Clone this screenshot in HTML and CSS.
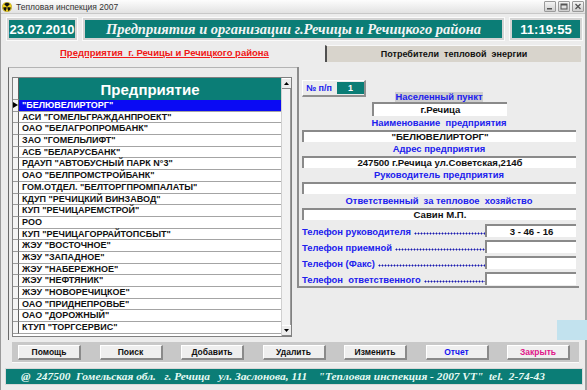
FILE: index.html
```html
<!DOCTYPE html>
<html lang="ru">

<head>
    <meta charset="UTF-8">
    <title>Тепловая инспекция 2007</title>
    <link rel="stylesheet" href="styles.css">
</head>

<body>
    <div class="window">
        <!-- Title bar -->
        <div class="titlebar">
            <svg class="app-icon" width="10" height="10" viewBox="0 0 10 10">
                <circle cx="5" cy="5" r="4.8" fill="#f2d21a" stroke="#8a7a10" stroke-width="0.4" />
                <path d="M5 5 L2.2 2.2 A4 4 0 0 1 7.8 2.2 Z" fill="#111" />
                <path d="M5 5 L8.9 5.6 A4 4 0 0 1 6.2 8.9 Z" fill="#111" />
                <path d="M5 5 L3.8 8.9 A4 4 0 0 1 1.1 5.6 Z" fill="#111" />
                <circle cx="5" cy="5" r="1.1" fill="#f2d21a" />
                <circle cx="5" cy="5" r="0.7" fill="#111" />
            </svg>
            <span class="caption">Тепловая инспекция 2007</span>
            <div class="wnd-btns">
                <span class="wnd-btn"><svg width="8" height="7" viewBox="0 0 8 7"><rect x="1" y="5" width="5" height="1.5" fill="#555" /></svg></span>
                <span class="wnd-btn"><svg width="8" height="7" viewBox="0 0 8 7"><rect x="1" y="1" width="6" height="5" fill="none" stroke="#555" stroke-width="1" /><rect x="1" y="1" width="6" height="1.5" fill="#555" /></svg></span>
                <span class="wnd-btn"><svg width="8" height="7" viewBox="0 0 8 7"><path d="M1.5 1 L6.5 6 M6.5 1 L1.5 6" stroke="#555" stroke-width="1.3" /></svg></span>
            </div>
        </div>

        <!-- Header with date, title and clock -->
        <div class="header">
            <div class="tbox date">23.07.2010</div>
            <div class="tbox title">Предприятия и организации г.Речицы и Речицкого района</div>
            <div class="tbox time">11:19:55</div>
        </div>

        <!-- Tabs -->
        <div class="subrow">
            <a class="link">Предприятия&nbsp; г. Речицы и Речицкого района</a>
            <div class="tab">Потребители&nbsp; тепловой&nbsp; энергии</div>
        </div>

        <div class="main">
            <!-- List of enterprises -->
            <div class="list-frame">
                <div class="list">
                    <div class="grid">
                        <div class="grid-head"><span class="sel"></span><span class="head-cell">Предприятие</span></div>
                        <div class="row current"><span class="sel"><i class="pointer"></i></span><span class="cell">"БЕЛЮВЕЛИРТОРГ"</span></div>
                        <div class="row"><span class="sel"></span><span class="cell">АСИ "ГОМЕЛЬГРАЖДАНПРОЕКТ"</span></div>
                        <div class="row"><span class="sel"></span><span class="cell">ОАО "БЕЛАГРОПРОМБАНК"</span></div>
                        <div class="row"><span class="sel"></span><span class="cell">ЗАО "ГОМЕЛЬЛИФТ"</span></div>
                        <div class="row"><span class="sel"></span><span class="cell">АСБ "БЕЛАРУСБАНК"</span></div>
                        <div class="row"><span class="sel"></span><span class="cell">РДАУП "АВТОБУСНЫЙ ПАРК N°3"</span></div>
                        <div class="row"><span class="sel"></span><span class="cell">ОАО "БЕЛПРОМСТРОЙБАНК"</span></div>
                        <div class="row"><span class="sel"></span><span class="cell">ГОМ.ОТДЕЛ. "БЕЛТОРГПРОМПАЛАТЫ"</span></div>
                        <div class="row"><span class="sel"></span><span class="cell">КДУП "РЕЧИЦКИЙ ВИНЗАВОД"</span></div>
                        <div class="row"><span class="sel"></span><span class="cell">КУП "РЕЧИЦАРЕМСТРОЙ"</span></div>
                        <div class="row"><span class="sel"></span><span class="cell">РОО</span></div>
                        <div class="row"><span class="sel"></span><span class="cell">КУП "РЕЧИЦАГОРРАЙТОПСБЫТ"</span></div>
                        <div class="row"><span class="sel"></span><span class="cell">ЖЭУ "ВОСТОЧНОЕ"</span></div>
                        <div class="row"><span class="sel"></span><span class="cell">ЖЭУ "ЗАПАДНОЕ"</span></div>
                        <div class="row"><span class="sel"></span><span class="cell">ЖЭУ "НАБЕРЕЖНОЕ"</span></div>
                        <div class="row"><span class="sel"></span><span class="cell">ЖЭУ "НЕФТЯНИК"</span></div>
                        <div class="row"><span class="sel"></span><span class="cell">ЖЭУ "НОВОРЕЧИЦКОЕ"</span></div>
                        <div class="row"><span class="sel"></span><span class="cell">ОАО "ПРИДНЕПРОВЬЕ"</span></div>
                        <div class="row"><span class="sel"></span><span class="cell">ОАО "ДОРОЖНЫЙ"</span></div>
                        <div class="row"><span class="sel"></span><span class="cell">КТУП "ТОРГСЕРВИС"</span></div>
                    </div>
                    <div class="vscroll">
                        <span class="arrow"><svg width="5" height="3" viewBox="0 0 5 3"><path d="M0 3 L2.5 0 L5 3 Z" fill="#000" /></svg></span>
                        <span class="track"></span>
                        <span class="arrow"><svg width="5" height="3" viewBox="0 0 5 3"><path d="M0 0 L2.5 3 L5 0 Z" fill="#000" /></svg></span>
                    </div>
                </div>
            </div>

            <!-- Details of the current enterprise -->
            <div class="card">
                <div class="np-row">
                    <div class="np-box"><span class="np-label">№ п/п</span><span class="np-num">1</span></div>
                    <div class="lbl hl">Населенный пункт</div>
                </div>
                <div class="field city">г.Речица</div>
                <div class="lbl">Наименование&nbsp; предприятия</div>
                <div class="field">"БЕЛЮВЕЛИРТОРГ"</div>
                <div class="lbl">Адрес предприятия</div>
                <div class="field">247500 г.Речица ул.Советская,214б</div>
                <div class="lbl">Руководитель предприятия</div>
                <div class="field"></div>
                <div class="lbl">Ответственный&nbsp; за тепловое&nbsp; хозяйство</div>
                <div class="field">Савин М.П.</div>
                <div class="phones">
                    <div class="phone"><span class="phone-lbl">Телефон руководителя</span><span class="dots"></span><span class="field phone-val">3 - 46 - 16</span></div>
                    <div class="phone"><span class="phone-lbl">Телефон приемной</span><span class="dots"></span><span class="field phone-val"></span></div>
                    <div class="phone"><span class="phone-lbl">Телефон (Факс)</span><span class="dots"></span><span class="field phone-val"></span></div>
                    <div class="phone"><span class="phone-lbl">Телефон&nbsp; ответственного</span><span class="dots"></span><span class="field phone-val"></span></div>
                </div>
            </div>
        </div>

        <!-- Command buttons -->
        <div class="buttons">
            <button class="btn">Помощь</button>
            <button class="btn">Поиск</button>
            <button class="btn">Добавить</button>
            <button class="btn">Удалить</button>
            <button class="btn">Изменить</button>
            <button class="btn report">Отчет</button>
            <button class="btn close">Закрыть</button>
        </div>

        <div class="footer">@&nbsp; 247500&nbsp; Гомельская обл.&nbsp;&nbsp; г. Речица&nbsp;&nbsp; ул. Заслонова, 111&nbsp;&nbsp;&nbsp; "Тепловая инспекция - 2007 VT"&nbsp; tel.&nbsp; 2-74-43</div>
    </div>
    <div class="desk-patch"></div>
</body>

</html>
```

FILE: styles.css
```css
/* Page */
body {
    margin: 0;
    background: #dcdcdc;
    font-family: "Liberation Sans", Arial, sans-serif;
}

.window {
    position: relative;
    width: 587px;
    height: 390px;
    box-sizing: border-box;
    background: #ececec;
    border-left: 1px solid #9a9a9a;
    border-right: 2px solid #a0a0a0;
    overflow: hidden;
}

/* Title bar */
.titlebar {
    height: 14px;
    display: flex;
    align-items: center;
    padding-left: 1px;
    background: linear-gradient(#fdfdfd, #e2e2e2);
    border-bottom: 1px solid #c8c8c8;
    box-sizing: border-box;
}

.app-icon {
    margin-right: 4px;
}

.caption {
    font-size: 8.5px;
    color: #333;
}

.wnd-btns {
    margin-left: auto;
    margin-right: 1px;
    display: flex;
    gap: 2px;
}

.wnd-btn {
    width: 10px;
    height: 9px;
    display: flex;
    align-items: center;
    justify-content: center;
    background: linear-gradient(#f4f4f4, #cfcfcf);
    border: 1px solid #9a9a9a;
    border-radius: 1px;
}

/* Header */
.header {
    display: flex;
    gap: 6px;
    padding: 4px 0 0 6px;
}

.tbox {
    height: 22px;
    box-sizing: border-box;
    background: #0b7d76;
    border: 2px solid #d4d4d4;
    box-shadow: 0 0 0 1px #fafafa;
    color: #fff;
    display: flex;
    align-items: center;
    justify-content: center;
}

.date {
    width: 70px;
    font-weight: bold;
    font-size: 13px;
}

.title {
    width: 421px;
    font-family: "Liberation Serif", "Times New Roman", serif;
    font-style: italic;
    font-weight: bold;
    font-size: 14.5px;
    color: #f4f4f4;
}

.time {
    width: 72px;
    font-weight: bold;
    font-size: 13px;
}

/* Tabs */
.subrow {
    display: flex;
    align-items: center;
    height: 27px;
}

.link {
    margin-left: 59px;
    margin-top: -2px;
    font-size: 9.5px;
    font-weight: bold;
    color: #f01818;
    text-decoration: underline;
}

.tab {
    margin-left: auto;
    margin-right: 4px;
    width: 256px;
    height: 17px;
    box-sizing: border-box;
    background: #d8d4cc;
    border-left: 2px solid #505050;
    border-top: 1px solid #f8f8f8;
    font-size: 9px;
    font-weight: bold;
    color: #111;
    display: flex;
    align-items: center;
    justify-content: center;
}

/* Main area */
.main {
    display: flex;
    height: 273px;
}

.list-frame {
    width: 289px;
    margin-left: 7px;
    box-sizing: border-box;
    border-left: 1px solid #6a6a6a;
    border-top: 1px solid #b4b4b4;
    padding: 9px 0 0 3px;
}

.list {
    display: flex;
    width: 280px;
    height: 260px;
    box-sizing: border-box;
    border: 1px solid #808080;
    background: #fff;
}

.grid {
    width: 271px;
}

.grid-head,
.row {
    display: flex;
}

.grid-head {
    height: 22px;
}

.sel {
    width: 6px;
    flex-shrink: 0;
    box-sizing: border-box;
    border-right: 1px solid #606060;
    border-bottom: 1px solid #9a9a9a;
    background: #f4f4f4;
    position: relative;
}

.head-cell {
    flex: 1;
    background: #0b7d76;
    color: #fff;
    font-size: 15px;
    font-weight: bold;
    display: flex;
    align-items: center;
    justify-content: center;
}

.row {
    height: 11.7px;
}

.cell {
    flex: 1;
    box-sizing: border-box;
    border-bottom: 1px solid #a4a4a4;
    padding-left: 3px;
    font-size: 9px;
    font-weight: bold;
    line-height: 11px;
    color: #111;
    white-space: nowrap;
}

.row.current .cell {
    background: #0a0af4;
    color: #fff;
}

.pointer {
    position: absolute;
    left: 0;
    top: 2px;
    border-left: 5px solid #000;
    border-top: 3px solid transparent;
    border-bottom: 3px solid transparent;
}

.vscroll {
    width: 9px;
    display: flex;
    flex-direction: column;
    background: #f2f2f2;
    border-left: 1px solid #d0d0d0;
}

.arrow {
    height: 9px;
    display: flex;
    align-items: center;
    justify-content: center;
    background: #ececec;
    border-top: 1px solid #fff;
    border-bottom: 1px solid #888;
}

.track {
    flex: 1;
    border-right: 1px solid #9a9a9a;
}

/* Details card */
.card {
    width: 282px;
    height: 221px;
    box-sizing: border-box;
    border-left: 2px solid #8c8c8c;
    border-bottom: 2px solid #8c8c8c;
    padding: 13px 3px 0 3px;
}

.np-row {
    display: flex;
    height: 22px;
}

.np-box {
    width: 64px;
    height: 17px;
    box-sizing: border-box;
    border-top: 1px solid #fff;
    border-left: 1px solid #fff;
    border-right: 2px solid #909090;
    border-bottom: 2px solid #909090;
    display: flex;
    align-items: center;
    padding-left: 3px;
    gap: 5px;
}

.np-label {
    font-size: 9px;
    font-weight: bold;
    color: #2020ee;
}

.np-num {
    width: 27px;
    height: 12px;
    background: #0b7d76;
    color: #fff;
    font-size: 9px;
    font-weight: bold;
    text-align: center;
    line-height: 12px;
}

.lbl {
    height: 14px;
    font-size: 9.4px;
    font-weight: bold;
    color: #2020ee;
    text-align: center;
    line-height: 14px;
    white-space: nowrap;
}

.lbl.hl {
    align-self: flex-end;
    margin-left: 29px;
    width: 88px;
    height: 10px;
    line-height: 10px;
    background: #cdcdcd;
}

.field {
    height: 12px;
    box-sizing: border-box;
    background: #fff;
    border-top: 2px solid #8a8a8a;
    border-left: 2px solid #8a8a8a;
    font-size: 9.6px;
    font-weight: bold;
    color: #111;
    text-align: center;
    line-height: 10px;
    white-space: nowrap;
}

.field.city {
    width: 135px;
    height: 14px;
    line-height: 12px;
    margin-left: 70px;
}

.phones {
    margin-top: 4px;
    display: flex;
    flex-direction: column;
    gap: 3px;
}

.phone {
    display: flex;
    align-items: flex-end;
    height: 13px;
}

.phone-lbl {
    font-size: 9.4px;
    font-weight: bold;
    color: #2020ee;
    line-height: 11px;
    white-space: nowrap;
    padding-right: 3px;
}

/* dotted leader between label and value */
.dots {
    flex: 1;
    height: 3px;
    margin-bottom: 2px;
    background-image: radial-gradient(circle, #1a1ab0 0.9px, transparent 1.1px);
    background-size: 3px 3px;
    background-repeat: repeat-x;
}

.phone-val {
    width: 91px;
    flex-shrink: 0;
    height: 13px;
    line-height: 11px;
}

/* Buttons */
.buttons {
    display: flex;
    gap: 18.5px;
    margin: 2px 6px 0 11px;
    height: 21px;
    box-sizing: border-box;
    align-items: center;
    padding-left: 6px;
    background: #c8c8c8;
    border-bottom: 1px solid #fafafa;
}

.btn {
    width: 63px;
    height: 15px;
    padding: 0;
    box-sizing: border-box;
    background: #efefef;
    border: none;
    border-top: 1px solid #fff;
    border-left: 1px solid #fff;
    border-right: 2px solid #8a8a8a;
    border-bottom: 2px solid #8a8a8a;
    font-family: "Liberation Sans", Arial, sans-serif;
    font-size: 8.5px;
    font-weight: bold;
    color: #111;
}

.btn.report {
    color: #1414f0;
}

.btn.close {
    color: #e0188a;
}

/* Footer */
.footer {
    margin: 5px 2px 0 4px;
    height: 17px;
    box-sizing: border-box;
    background: #0b7d76;
    border: 1px solid #d8d8d8;
    padding-left: 15px;
    font-family: "Liberation Serif", "Times New Roman", serif;
    font-style: italic;
    font-weight: bold;
    font-size: 11.4px;
    line-height: 15px;
    color: #e6fbf4;
    white-space: nowrap;
}

/* Bit of desktop showing over the window corner */
.desk-patch {
    position: absolute;
    left: 557px;
    top: 320px;
    width: 30px;
    height: 20px;
    background: #c2e2ee;
}
```
